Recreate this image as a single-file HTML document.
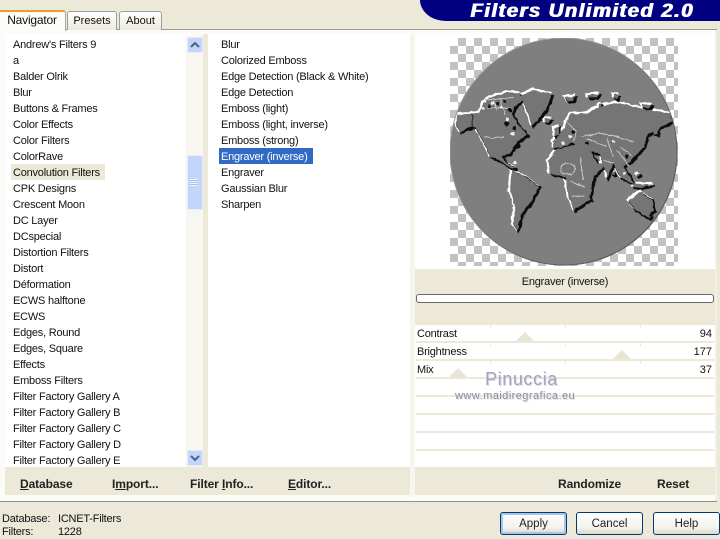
<!DOCTYPE html>
<html><head><meta charset="utf-8"><style>
html,body{margin:0;padding:0}
body{width:720px;height:536px;overflow:hidden;position:relative;background:#ece9d8;font:11px/16px "Liberation Sans",sans-serif;color:#111}
.a{position:absolute;white-space:nowrap}
.t{letter-spacing:-.22px}
.b{font-weight:bold;font-size:12px;line-height:16px;color:#222;letter-spacing:-.1px}
.line{position:absolute;left:416px;width:298px;height:2px;background:#ece9d8}
.tri{position:absolute;width:0;height:0;border-left:9px solid transparent;border-right:9px solid transparent;border-bottom:9px solid #e8e5d4}
.tick{position:absolute;width:1px;height:3px;background:#e8e8e0}
.btn{position:absolute;top:512px;width:65px;height:21px;border:1px solid #003c74;border-radius:3px;background:linear-gradient(#fff,#f3f2ec 70%,#dcd8ca);text-align:center;font-size:11.5px;line-height:22px;color:#222}
.sb{position:absolute;left:187px;width:14px;background:#c3d5fb;border:1px solid #e6eefc;box-sizing:content-box}
</style></head><body>
<!-- banner -->
<div class="a" style="left:420px;top:0;width:300px;height:21px;background:#000080;border-bottom-left-radius:26px 21px"></div>
<div class="a" style="left:470px;top:1px;font:italic bold 19px/21px 'Liberation Sans',sans-serif;color:#fff;letter-spacing:1.35px;text-shadow:1px 0 0 #fff;transform:scaleX(1.07);transform-origin:0 0">Filters Unlimited 2.0</div>
<!-- tabs -->
<div class="a" style="left:0;top:29px;width:717px;height:471px;background:#fbfbf8;border-top:1px solid #9a9c94;border-bottom:1px solid #8f918a;box-shadow:inset -2px 0 0 #f1efe6"></div>
<div class="a" style="left:0;top:10px;width:66px;height:21px;background:#fcfcfa;border-top:2px solid #f0a020;border-right:1px solid #a8a89e;border-radius:0 3px 0 0;box-sizing:border-box;text-align:center;line-height:17px;font-size:12px;letter-spacing:-.2px;padding-right:1px">Navigator</div>
<div class="a" style="left:67px;top:11px;height:18px;background:linear-gradient(#fff,#ece9df);border:1px solid #97a0a0;border-bottom:0;border-radius:3px 3px 0 0;text-align:center;line-height:19px;font-size:11px;width:48px">Presets</div>
<div class="a" style="left:119px;top:11px;width:41px;height:18px;background:linear-gradient(#fff,#ece9df);border:1px solid #97a0a0;border-bottom:0;border-radius:3px 3px 0 0;text-align:center;line-height:19px;font-size:11px">About</div>
<!-- lists -->
<div class="a" style="left:5px;top:34px;width:180px;height:433px;background:#fff"></div>
<div class="a" style="left:203px;top:34px;width:5px;height:433px;background:#ece9d8"></div>
<div class="a" style="left:208px;top:34px;width:202px;height:433px;background:#fff"></div>
<div class="a" style="left:410px;top:34px;width:5px;height:463px;background:#f6f5ee"></div>
<!-- scrollbar -->
<div class="a" style="left:186px;top:36px;width:17px;height:431px;background:#f7f6f0"></div>
<div class="sb" style="top:37px;height:14px"></div>
<svg class="a" style="left:187px;top:37px" width="16" height="16"><path d="M4 10L8 6L12 10" fill="none" stroke="#4d6185" stroke-width="2"/></svg>
<div class="sb" style="top:155px;height:53px"></div>
<div class="a" style="left:190px;top:179px;width:8px;height:7px;background:repeating-linear-gradient(#eef3fd 0 1px,#a9bfe8 1px 2px)"></div>
<div class="sb" style="top:450px;height:14px"></div>
<svg class="a" style="left:187px;top:450px" width="16" height="16"><path d="M4 6L8 10L12 6" fill="none" stroke="#4d6185" stroke-width="2"/></svg>
<!-- list 1 -->
<div class="a" style="left:11px;top:164px;width:94px;height:16px;background:#ece9d8"></div>
<div class="a t" style="left:13px;top:37px;width:170px;height:430px;overflow:hidden">Andrew's Filters 9<br>a<br>Balder Olrik<br>Blur<br>Buttons &amp; Frames<br>Color Effects<br>Color Filters<br>ColorRave<br>Convolution Filters<br>CPK Designs<br>Crescent Moon<br>DC Layer<br>DCspecial<br>Distortion Filters<br>Distort<br>Déformation<br>ECWS halftone<br>ECWS<br>Edges, Round<br>Edges, Square<br>Effects<br>Emboss Filters<br>Filter Factory Gallery A<br>Filter Factory Gallery B<br>Filter Factory Gallery C<br>Filter Factory Gallery D<br>Filter Factory Gallery E</div>
<!-- list 2 -->
<div class="a" style="left:219px;top:148px;width:94px;height:16px;background:#316ac5"></div>
<div class="a t" style="left:221px;top:37px">Blur<br>Colorized Emboss<br>Edge Detection (Black &amp; White)<br>Edge Detection<br>Emboss (light)<br>Emboss (light, inverse)<br>Emboss (strong)<br><span style="color:#fff">Engraver (inverse)</span><br>Engraver<br>Gaussian Blur<br>Sharpen</div>
<!-- bottom bars -->
<div class="a" style="left:5px;top:467px;width:405px;height:28px;background:#ece9d8"></div>
<div class="a" style="left:415px;top:467px;width:300px;height:28px;background:#ece9d8"></div>
<div class="a b" style="left:20px;top:476px"><u>D</u>atabase</div>
<div class="a b" style="left:112px;top:476px">I<u>m</u>port...</div>
<div class="a b" style="left:190px;top:476px">Filter <u>I</u>nfo...</div>
<div class="a b" style="left:288px;top:476px"><u>E</u>ditor...</div>
<div class="a b" style="left:558px;top:476px">Randomize</div>
<div class="a b" style="left:657px;top:476px">Reset</div>
<!-- preview -->
<div class="a" style="left:415px;top:33px;width:300px;height:236px;background:#fff"></div>
<svg class="a" style="left:450px;top:38px" width="228" height="228" viewBox="450 38 228 228">
<defs>
<pattern id="c" x="450" y="38" width="16" height="16" patternUnits="userSpaceOnUse"><rect width="16" height="16" fill="#fff"/><rect x="8" y="0" width="8" height="8" fill="#c2c2c2"/><rect x="0" y="8" width="8" height="8" fill="#c2c2c2"/></pattern>
<clipPath id="cp"><circle cx="563.5" cy="151.5" r="113"/></clipPath>
<filter id="r" filterUnits="userSpaceOnUse" x="450" y="38" width="228" height="228"><feTurbulence type="fractalNoise" baseFrequency=".2" numOctaves="2" seed="4"/><feDisplacementMap in="SourceGraphic" scale="3" xChannelSelector="R" yChannelSelector="G"/></filter>
<g id="m" transform="translate(400 0) scale(.3333)">
<path d="M172 345L215 340L240 338L250 310L272 292L320 278L358 280L368 298L345 320L336 342L352 370L382 404L352 425L328 462L305 470L322 490L350 506L330 502L302 482L272 470L252 430L226 382L214 380L180 396L168 370Z"/>
<path d="M360 288L400 270L455 282L442 320L422 350L396 376L378 325Z"/>
<path d="M335 510L375 530L416 560L396 600L366 640L352 690L340 672L346 620L330 570Z"/>
<path d="M445 482L470 448L530 432L570 452L592 490L620 490L582 530L566 600L522 630L506 590L496 532L450 520Z"/>
<path d="M458 425L490 390L510 342L560 340L600 320L650 308L720 325L812 340L816 365L772 385L742 405L732 440L702 472L692 482L672 500L702 552L662 532L640 490L622 532L600 462L560 452L520 428L482 442L460 442Z"/>
<path d="M685 602L720 576L756 600L762 630L742 652L702 626Z"/>
<path d="M565 575L572 600L556 606Z"/>
<path d="M496 292L525 288L520 302L504 304Z"/>
<path d="M434 355L452 358L446 368L434 364Z"/>
<path d="M562 285L596 282L590 292L566 292Z"/>
<path d="M462 385L476 380L478 404L464 408Z"/>
<path d="M760 378L780 372L772 405L760 402Z"/>
<path d="M700 550L760 555L725 562L700 560Z"/>
<path d="M642 282L656 286L652 296L642 292Z"/>
<path d="M725 312L755 316L750 324L728 322Z"/>
<path d="M738 650L752 648L750 656Z"/>
<circle cx="600" cy="315" r="4"/><circle cx="640" cy="520" r="5"/><circle cx="680" cy="530" r="5"/><circle cx="715" cy="525" r="4"/>
</g>
</defs>
<rect x="450" y="38" width="228" height="228" fill="url(#c)"/>
<circle cx="563.5" cy="151.5" r="114" fill="#9a9a9a"/>
<circle cx="564.3" cy="152.3" r="113.3" fill="#5f5f5f"/>
<circle cx="563.5" cy="151.5" r="113" fill="#7f7f7f"/>
<g clip-path="url(#cp)"><g filter="url(#r)">
<use href="#m" x="-1.2" y="-1.2" fill="#fff" stroke="#fff" stroke-width="6"/>
<use href="#m" x="1.4" y="1.4" fill="#0c0c0c" stroke="#0c0c0c" stroke-width="6"/>
<use href="#m" fill="#747474"/>
<g transform="translate(400 0) scale(.3333)">
<g fill="none" stroke="#c8c8c8" stroke-width="3">
<path d="M255 300L340 292M258 322L335 325M300 295L315 345M280 300L290 330M250 412L312 412"/>
<path d="M500 365L530 395L520 425M540 410L600 400L650 410L700 425M560 415L620 440M620 415L640 470M660 440L700 470M610 480L640 490"/>
<path d="M483 505C483 485 525 485 525 505C525 530 483 530 483 505ZM510 545L555 560M515 590L555 590M540 470L550 540M650 450L690 500"/>
</g>
<g fill="#111"><circle cx="268" cy="318" r="5"/><circle cx="292" cy="312" r="5"/><circle cx="315" cy="305" r="5"/><circle cx="330" cy="330" r="6"/><circle cx="320" cy="372" r="7"/><circle cx="345" cy="385" r="6"/><circle cx="355" cy="438" r="7"/><circle cx="520" cy="395" r="5"/><circle cx="560" cy="430" r="5"/><circle cx="680" cy="470" r="5"/></g>
<g fill="#eee"><circle cx="278" cy="308" r="5"/><circle cx="305" cy="322" r="5"/><circle cx="250" cy="325" r="4"/><circle cx="322" cy="358" r="5"/><circle cx="338" cy="402" r="6"/><circle cx="345" cy="488" r="5"/><circle cx="510" cy="410" r="5"/><circle cx="490" cy="430" r="5"/><circle cx="640" cy="425" r="4"/><circle cx="672" cy="520" r="4"/></g>
<path d="M218 340L218 380" stroke="#333" stroke-width="4"/>
</g>
</g></g>
</svg>
<!-- right panel -->
<div class="a" style="left:415px;top:269px;width:300px;height:56px;background:#ece9d8"></div>
<div class="a t" style="left:415px;top:274px;width:300px;text-align:center">Engraver (inverse)</div>
<div class="a" style="left:416px;top:294px;width:296px;height:7px;background:#fff;border:1px solid #666;border-radius:3px"></div>
<div class="a" style="left:415px;top:325px;width:300px;height:142px;background:#fff"></div>
<div class="line" style="top:341px"></div><div class="line" style="top:359px"></div><div class="line" style="top:377px"></div><div class="line" style="top:395px"></div><div class="line" style="top:413px"></div><div class="line" style="top:431px"></div><div class="line" style="top:449px"></div>
<div class="tick" style="left:490px;top:325px"></div><div class="tick" style="left:565px;top:325px"></div><div class="tick" style="left:640px;top:325px"></div>
<div class="tick" style="left:490px;top:343px"></div><div class="tick" style="left:565px;top:343px"></div><div class="tick" style="left:640px;top:343px"></div>
<div class="tick" style="left:490px;top:361px"></div><div class="tick" style="left:565px;top:361px"></div><div class="tick" style="left:640px;top:361px"></div>
<div class="tri" style="left:516px;top:332px"></div>
<div class="tri" style="left:613px;top:350px"></div>
<div class="tri" style="left:449px;top:368px"></div>
<div class="a t" style="left:417px;top:326px">Contrast</div>
<div class="a t" style="left:417px;top:344px">Brightness</div>
<div class="a t" style="left:417px;top:362px">Mix</div>
<div class="a" style="right:8px;top:326px">94</div>
<div class="a" style="right:8px;top:344px">177</div>
<div class="a" style="right:8px;top:362px">37</div>
<!-- watermark -->
<div class="a" style="left:485px;top:368px;font-size:18px;line-height:22px;letter-spacing:.6px;color:#a4a4c0;text-shadow:1px 1px 0 #d8d8e4">Pinuccia</div>
<div class="a" style="left:455px;top:389px;font-size:11px;line-height:14px;letter-spacing:.45px;color:#8c8c9e;text-shadow:1px 1px 0 #e0e0e6">www.maidiregrafica.eu</div>
<!-- status -->
<div class="a t" style="left:2px;top:513px;line-height:13px">Database:<br>Filters:</div>
<div class="a t" style="left:58px;top:513px;line-height:13px">ICNET-Filters<br>1228</div>
<!-- buttons -->
<div class="btn" style="left:500px;box-shadow:inset 0 0 0 2px #a9c3ec">Apply</div>
<div class="btn" style="left:576px">Cancel</div>
<div class="btn" style="left:653px">Help</div>
</body></html>
